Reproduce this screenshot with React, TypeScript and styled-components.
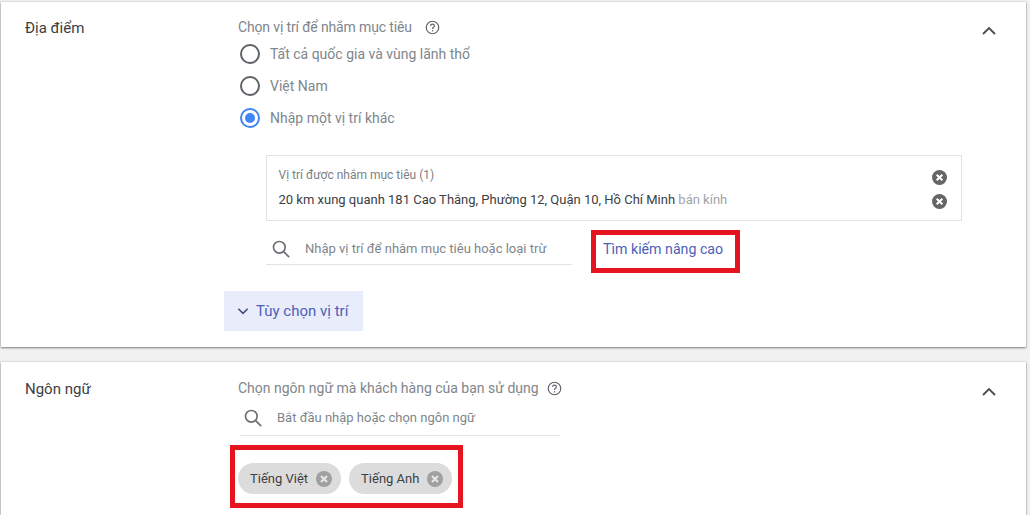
import React from 'react';
import styled, { createGlobalStyle } from 'styled-components';

const GlobalStyle = createGlobalStyle`
  html, body {
    margin: 0;
    padding: 0;
    height: 515px;
    overflow: hidden;
    background: #f1f1f1;
    font-family: Roboto, "Noto Sans", sans-serif;
  }
`;

const Page = styled.div`
  width: 1030px;
  height: 515px;
  overflow: hidden;
  padding: 2px 4px 0 1px;
  box-sizing: border-box;
  display: flex;
  flex-direction: column;
  gap: 15px;
`;

const Card = styled.section<{ $height: number; $top: number }>`
  flex: none;
  height: ${(p) => p.$height}px;
  box-sizing: border-box;
  padding-top: ${(p) => p.$top}px;
  background: #fff;
  box-shadow: 0 1px 2px rgb(0 0 0 / 45%), 0 0 1px rgb(0 0 0 / 30%);
  display: grid;
  grid-template-columns: 237px 1fr 50px;
`;

const SectionName = styled.h2`
  margin: 0;
  padding: 1px 0 0 24px;
  font-size: 15px;
  line-height: 20px;
  font-weight: 400;
  color: #3c4043;
`;

const Body = styled.div`
  display: flex;
  flex-direction: column;
  align-items: flex-start;
  min-width: 0;
`;

const Collapse = styled.div`
  display: flex;
  justify-content: flex-start;
  padding: 1.5px 0 0 1px;
  color: #4a4d50;
`;

const Prompt = styled.div<{ $gap: number; $track?: number }>`
  display: flex;
  align-items: center;
  gap: ${(p) => p.$gap}px;
  height: 20px;
  font-size: 14px;
  letter-spacing: ${(p) => p.$track ?? 0}px;
  color: #80868b;
`;

const HelpIcon = () => (
  <svg width="15" height="15" viewBox="0 0 24 24" fill="none" stroke="#5f6368" strokeWidth="1.9">
    <circle cx="12" cy="12" r="10" />
    <path d="M9 9.6a3 3 0 0 1 6 0c0 2-3 2.3-3 4.6" />
    <path d="M12 16.2v2" />
  </svg>
);

const RadioList = styled.div`
  display: flex;
  flex-direction: column;
  gap: 12px;
  margin-top: 7px;
  margin-left: 2px;
`;

const RadioRow = styled.label`
  display: flex;
  align-items: center;
  gap: 10px;
  height: 20px;
  font-size: 14px;
  color: #80868b;
`;

const RadioMark = styled.span<{ $on?: boolean }>`
  box-sizing: border-box;
  width: 20px;
  height: 20px;
  border-radius: 50%;
  border: 2px solid ${(p) => (p.$on ? '#4285f4' : '#5f6368')};
  display: flex;
  align-items: center;
  justify-content: center;
  &::after {
    content: '';
    display: ${(p) => (p.$on ? 'block' : 'none')};
    width: 10px;
    height: 10px;
    border-radius: 50%;
    background: #4285f4;
  }
`;

const TargetBox = styled.div`
  box-sizing: border-box;
  width: 696px;
  height: 66px;
  margin: 27px 0 0 28px;
  padding: 7px 13px 0 11.5px;
  border: 1px solid #e3e3e3;
  display: grid;
  grid-template-columns: 1fr 16px;
  grid-template-rows: 24px 24px;
  align-items: center;
`;

const TargetCaption = styled.div`
  font-size: 12px;
  color: #7a7f84;
`;

const TargetValue = styled.div`
  font-size: 13px;
  color: #3c4043;
  span {
    color: #a0a4a8;
  }
`;

const RemoveSlot = styled.div`
  display: flex;
  padding-top: 4px;
`;

const CloseGlyph = ({ size, fill, cross }: { size: number; fill: string; cross: string }) => (
  <svg width={size} height={size} viewBox="0 0 24 24">
    <circle cx="12" cy="12" r="12" fill={fill} />
    <path d="M7.5 7.5l9 9M16.5 7.5l-9 9" stroke={cross} strokeWidth="3.2" />
  </svg>
);

const SearchGlyph = () => (
  <svg width="20" height="20" viewBox="0 0 24 24" fill="none" stroke="#6b6f73" strokeWidth="2">
    <circle cx="10" cy="10" r="7" />
    <path d="M15.2 15.2l6.6 6.6" />
  </svg>
);

const SearchRow = styled.div`
  display: flex;
  align-items: flex-start;
  margin: 8px 0 0 28px;
`;

const SearchField = styled.div<{ $width: number; $height: number; $top: number; $pad: number; $left?: number }>`
  box-sizing: border-box;
  width: ${(p) => p.$width}px;
  height: ${(p) => p.$height}px;
  margin-left: ${(p) => p.$left ?? 0}px;
  display: flex;
  align-items: center;
  gap: 14px;
  padding: ${(p) => p.$top}px 0 0 ${(p) => p.$pad}px;
  border-bottom: 1px solid #e3e3e3;
  font-size: 13px;
  color: #80868b;
  white-space: nowrap;
`;

const AdvancedLink = styled.a`
  box-sizing: border-box;
  width: 149px;
  height: 43px;
  margin: 1px 0 0 19px;
  border: 5px solid #e6141f;
  display: flex;
  align-items: center;
  padding: 0 0 6px 7px;
  font-size: 14.2px;
  color: #4d5fb8;
  white-space: nowrap;
`;

const OptionsButton = styled.button`
  box-sizing: border-box;
  width: 139px;
  height: 40px;
  margin: 18px 0 0 -14px;
  padding: 0 0 0 12px;
  border: 0;
  background: #e8ecfb;
  color: #4d5fb8;
  font: 400 15px Roboto, sans-serif;
  display: flex;
  align-items: center;
  gap: 6px;
`;

const ChipFrame = styled.div`
  box-sizing: border-box;
  width: 233px;
  height: 63px;
  margin: 9px 0 0 -8px;
  border: 5px solid #e6141f;
  display: flex;
  align-items: center;
  gap: 8px;
  padding: 4px 0 0 3px;
`;

const Chip = styled.div`
  box-sizing: border-box;
  height: 31px;
  border-radius: 16px;
  background: #dcdcdc;
  padding: 0 9px 0 12px;
  display: flex;
  align-items: center;
  gap: 8px;
  font-size: 13px;
  color: #3c4043;
  white-space: nowrap;
`;

const Chevron = () => (
  <svg width="24" height="24" viewBox="0 0 24 24" fill="none" stroke="currentColor" strokeWidth="1.8">
    <path d="M6 15l6-6 6 6" />
  </svg>
);

export default function App() {
  return (
    <Page>
      <GlobalStyle />
      <Card $height={345} $top={15}>
        <SectionName>Địa điểm</SectionName>
        <Body>
          <Prompt $gap={13} $track={-0.15}>
            Chọn vị trí để nhắm mục tiêu <HelpIcon />
          </Prompt>
          <RadioList>
            <RadioRow><RadioMark />Tất cả quốc gia và vùng lãnh thổ</RadioRow>
            <RadioRow><RadioMark />Việt Nam</RadioRow>
            <RadioRow><RadioMark $on />Nhập một vị trí khác</RadioRow>
          </RadioList>
          <TargetBox>
            <TargetCaption>Vị trí được nhắm mục tiêu (1)</TargetCaption>
            <RemoveSlot><CloseGlyph size={15} fill="#666" cross="#fff" /></RemoveSlot>
            <TargetValue>
              20 km xung quanh 181 Cao Thắng, Phường 12, Quận 10, Hồ Chí Minh <span>bán kính</span>
            </TargetValue>
            <RemoveSlot><CloseGlyph size={15} fill="#666" cross="#fff" /></RemoveSlot>
          </TargetBox>
          <SearchRow>
            <SearchField $width={306} $height={36} $top={4} $pad={5}>
              <SearchGlyph />
              Nhập vị trí để nhắm mục tiêu hoặc loại trừ
            </SearchField>
            <AdvancedLink>Tìm kiếm nâng cao</AdvancedLink>
          </SearchRow>
          <OptionsButton>
            <svg width="14" height="14" viewBox="0 0 24 24" fill="none" stroke="#3c4a78" strokeWidth="2.6">
              <path d="M4 8l8 8 8-8" />
            </svg>
            Tùy chọn vị trí
          </OptionsButton>
        </Body>
        <Collapse><Chevron /></Collapse>
      </Card>
      <Card $height={180} $top={16}>
        <SectionName>Ngôn ngữ</SectionName>
        <Body>
          <Prompt $gap={8}>
            Chọn ngôn ngữ mà khách hàng của bạn sử dụng <HelpIcon />
          </Prompt>
          <SearchField $width={320} $height={38} $top={2} $pad={3} $left={2}>
            <SearchGlyph />
            Bắt đầu nhập hoặc chọn ngôn ngữ
          </SearchField>
          <ChipFrame>
            <Chip>Tiếng Việt <CloseGlyph size={16} fill="#a0a0a0" cross="#e6e6e6" /></Chip>
            <Chip>Tiếng Anh <CloseGlyph size={16} fill="#a0a0a0" cross="#e6e6e6" /></Chip>
          </ChipFrame>
        </Body>
        <Collapse><Chevron /></Collapse>
      </Card>
    </Page>
  );
}
